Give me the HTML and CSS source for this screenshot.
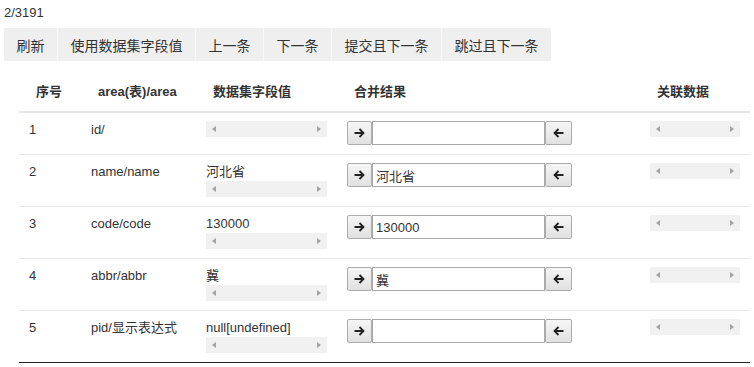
FILE: index.html
```html
<!DOCTYPE html>
<html lang="zh-CN">
<head>
  <meta charset="UTF-8" />
  <title>数据合并</title>
  <link rel="stylesheet" href="styles.css">
</head>
<body>
  <div class="counter">2/3191</div>

  <div class="toolbar">
    <button>刷新</button>
    <button>使用数据集字段值</button>
    <button>上一条</button>
    <button>下一条</button>
    <button>提交且下一条</button>
    <button>跳过且下一条</button>
  </div>

  <table class="merge-table">
    <colgroup>
      <col class="c-no" />
      <col class="c-field" />
      <col class="c-value" />
      <col class="c-result" />
      <col class="c-rel" />
    </colgroup>
    <thead>
      <tr>
        <th>序号</th>
        <th>area(表)/area</th>
        <th>数据集字段值</th>
        <th>合并结果</th>
        <th>关联数据</th>
      </tr>
    </thead>
    <tbody>
      <tr>
        <td>1</td>
        <td>id/</td>
        <td><div class="hscroll"></div></td>
        <td>
          <div class="merge">
            <span class="arrow-btn right"><svg width="11" height="10" viewBox="0 0 11 10"><path d="M0.5 5H9.5M5.5 1L9.5 5L5.5 9"/></svg></span>
            <input type="text" value="" />
            <span class="arrow-btn left"><svg width="11" height="10" viewBox="0 0 11 10"><path d="M10.5 5H1.5M5.5 1L1.5 5L5.5 9"/></svg></span>
          </div>
        </td>
        <td><div class="hscroll"></div></td>
      </tr>
      <tr>
        <td>2</td>
        <td>name/name</td>
        <td>河北省<div class="hscroll"></div></td>
        <td>
          <div class="merge">
            <span class="arrow-btn right"><svg width="11" height="10" viewBox="0 0 11 10"><path d="M0.5 5H9.5M5.5 1L9.5 5L5.5 9"/></svg></span>
            <input type="text" value="河北省" />
            <span class="arrow-btn left"><svg width="11" height="10" viewBox="0 0 11 10"><path d="M10.5 5H1.5M5.5 1L1.5 5L5.5 9"/></svg></span>
          </div>
        </td>
        <td><div class="hscroll"></div></td>
      </tr>
      <tr>
        <td>3</td>
        <td>code/code</td>
        <td>130000<div class="hscroll"></div></td>
        <td>
          <div class="merge">
            <span class="arrow-btn right"><svg width="11" height="10" viewBox="0 0 11 10"><path d="M0.5 5H9.5M5.5 1L9.5 5L5.5 9"/></svg></span>
            <input type="text" value="130000" />
            <span class="arrow-btn left"><svg width="11" height="10" viewBox="0 0 11 10"><path d="M10.5 5H1.5M5.5 1L1.5 5L5.5 9"/></svg></span>
          </div>
        </td>
        <td><div class="hscroll"></div></td>
      </tr>
      <tr>
        <td>4</td>
        <td>abbr/abbr</td>
        <td>冀<div class="hscroll"></div></td>
        <td>
          <div class="merge">
            <span class="arrow-btn right"><svg width="11" height="10" viewBox="0 0 11 10"><path d="M0.5 5H9.5M5.5 1L9.5 5L5.5 9"/></svg></span>
            <input type="text" value="冀" />
            <span class="arrow-btn left"><svg width="11" height="10" viewBox="0 0 11 10"><path d="M10.5 5H1.5M5.5 1L1.5 5L5.5 9"/></svg></span>
          </div>
        </td>
        <td><div class="hscroll"></div></td>
      </tr>
      <tr>
        <td>5</td>
        <td>pid/显示表达式</td>
        <td>null[undefined]<div class="hscroll"></div></td>
        <td>
          <div class="merge">
            <span class="arrow-btn right"><svg width="11" height="10" viewBox="0 0 11 10"><path d="M0.5 5H9.5M5.5 1L9.5 5L5.5 9"/></svg></span>
            <input type="text" value="" />
            <span class="arrow-btn left"><svg width="11" height="10" viewBox="0 0 11 10"><path d="M10.5 5H1.5M5.5 1L1.5 5L5.5 9"/></svg></span>
          </div>
        </td>
        <td><div class="hscroll"></div></td>
      </tr>
    </tbody>
  </table>
</body>
</html>
```

FILE: styles.css
```css
* {
  box-sizing: border-box;
}

body {
  margin: 4px;
  font-family: "Liberation Sans", "Noto Sans CJK SC", sans-serif;
  font-size: 13px;
  line-height: 18px;
  color: #333;
  background: #fff;
}

.counter {
  margin-bottom: 6px;
}

.toolbar {
  display: inline-flex;
  background: #efefef;
}

.toolbar button {
  height: 33px;
  padding: 0 12.5px;
  border: none;
  border-right: 1px solid #f8f8f8;
  background: #efefef;
  color: #333;
  font-family: inherit;
  font-size: 14px;
  cursor: pointer;
}

.toolbar button:last-child {
  border-right: none;
}

.merge-table {
  table-layout: fixed;
  border-collapse: collapse;
  width: 731px;
  margin: 14px 0 0 15px;
  border-bottom: 1px solid #222;
}

.c-no { width: 62px; }
.c-field { width: 115px; }
.c-value { width: 141px; }
.c-result { width: 303px; }
.c-rel { width: 110px; }

.merge-table th {
  text-align: left;
  font-weight: bold;
  padding: 8px 17px 10px;
  border-bottom: 2px solid #e6e6e6;
}

.merge-table td {
  vertical-align: top;
  padding: 8px 10px 9px;
  border-top: 1px solid #e8e8e8;
}

.hscroll {
  display: flex;
  justify-content: space-between;
  align-items: center;
  height: 16px;
  padding: 0 6px;
  background: #f1f1f1;
}

.hscroll::before,
.hscroll::after {
  content: "";
  width: 0;
  height: 0;
  border-top: 3.5px solid transparent;
  border-bottom: 3.5px solid transparent;
}

.hscroll::before {
  border-right: 4px solid #a3a3a3;
}

.hscroll::after {
  border-left: 4px solid #a3a3a3;
}

.merge {
  display: flex;
  height: 24px;
}

.arrow-btn {
  display: flex;
  align-items: center;
  justify-content: center;
  height: 24px;
  border: 1px solid #acacac;
  border-radius: 2px;
  background: linear-gradient(#f6f6f6, #e1e1e1);
}

.arrow-btn.right {
  width: 25px;
}

.arrow-btn.left {
  width: 27px;
}

.arrow-btn svg path {
  fill: none;
  stroke: #222;
  stroke-width: 1.8;
}

.merge input {
  width: 173px;
  height: 24px;
  margin: 0;
  padding: 0 3px;
  border: 1px solid #a9a9a9;
  font-family: inherit;
  font-size: 13px;
  color: #333;
}
```
